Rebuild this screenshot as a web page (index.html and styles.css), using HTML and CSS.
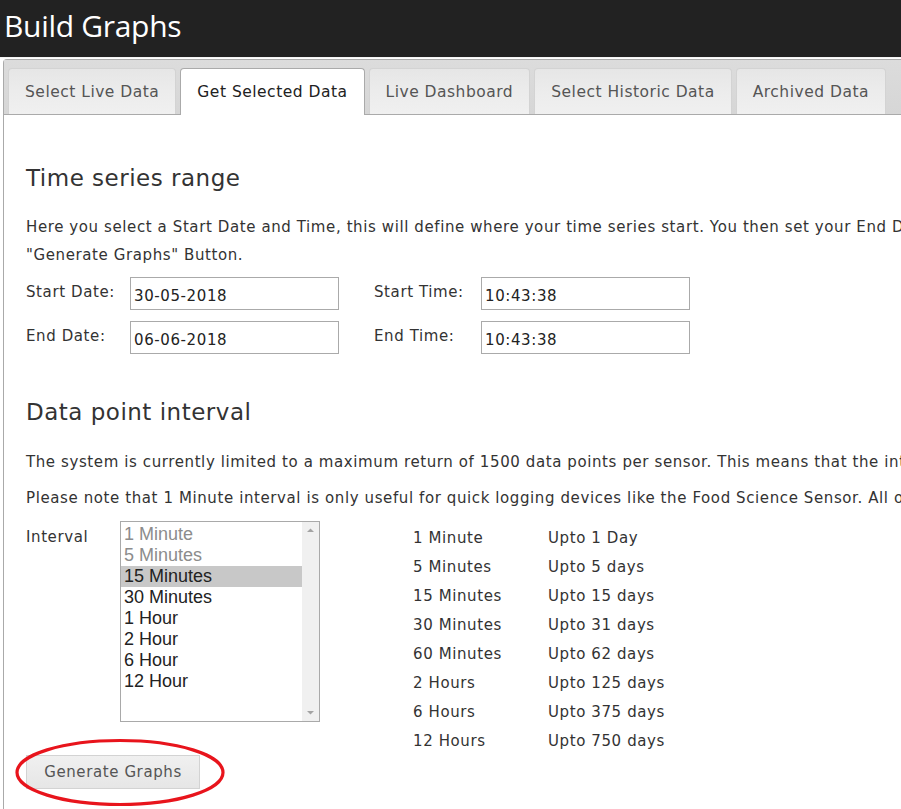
FILE: index.html
```html
<!DOCTYPE html>
<html lang="en">
<head>
<meta charset="utf-8">
<title>Build Graphs</title>
<link rel="stylesheet" href="styles.css">
</head>
<body>
<header class="topbar"><h1 class="title">Build Graphs</h1></header>
<div class="tabs">
  <ul class="tabnav">
    <li class="tab">Select Live Data</li>
    <li class="tab active">Get Selected Data</li>
    <li class="tab">Live Dashboard</li>
    <li class="tab">Select Historic Data</li>
    <li class="tab">Archived Data</li>
  </ul>
  <div class="panel">
    <h2 class="heading first">Time series range</h2>
    <p class="text">Here you select a Start Date and Time, this will define where your time series start. You then set your End Date and Time and click the<br>"Generate Graphs" Button.</p>
    <div class="range">
      <label class="lbl">Start Date:</label>
      <div class="cell"><input class="field" type="text" value="30-05-2018"></div>
      <label class="lbl">Start Time:</label>
      <div class="cell"><input class="field" type="text" value="10:43:38"></div>
      <label class="lbl">End Date:</label>
      <div class="cell"><input class="field" type="text" value="06-06-2018"></div>
      <label class="lbl">End Time:</label>
      <div class="cell"><input class="field" type="text" value="10:43:38"></div>
    </div>

    <h2 class="heading second">Data point interval</h2>
    <p class="text tight">The system is currently limited to a maximum return of 1500 data points per sensor. This means that the interval you select will limit the length of time series you can request.</p>
    <p class="text tight">Please note that 1 Minute interval is only useful for quick logging devices like the Food Science Sensor. All other sensors log at 15 minute intervals.</p>

    <div class="interval">
      <div class="ilabel">Interval</div>
      <div class="listbox" role="listbox">
        <div class="options">
          <div class="opt disabled">1 Minute</div>
          <div class="opt disabled">5 Minutes</div>
          <div class="opt selected">15 Minutes</div>
          <div class="opt">30 Minutes</div>
          <div class="opt">1 Hour</div>
          <div class="opt">2 Hour</div>
          <div class="opt">6 Hour</div>
          <div class="opt">12 Hour</div>
        </div>
        <div class="scrollbar">
          <svg class="arrow" width="17" height="17" viewBox="0 0 17 17"><path d="M5 10 L8.5 6.5 L12 10 Z" fill="#a3a3a3"/></svg>
          <svg class="arrow" width="17" height="17" viewBox="0 0 17 17"><path d="M5 7 L8.5 10.5 L12 7 Z" fill="#a3a3a3"/></svg>
        </div>
      </div>
      <table class="limits">
        <tr><td>1 Minute</td><td>Upto 1 Day</td></tr>
        <tr><td>5 Minutes</td><td>Upto 5 days</td></tr>
        <tr><td>15 Minutes</td><td>Upto 15 days</td></tr>
        <tr><td>30 Minutes</td><td>Upto 31 days</td></tr>
        <tr><td>60 Minutes</td><td>Upto 62 days</td></tr>
        <tr><td>2 Hours</td><td>Upto 125 days</td></tr>
        <tr><td>6 Hours</td><td>Upto 375 days</td></tr>
        <tr><td>12 Hours</td><td>Upto 750 days</td></tr>
      </table>
    </div>

    <div class="actions">
      <button class="btn" type="button">Generate Graphs</button>
      <svg class="ring" width="216" height="71" viewBox="0 0 216 71"><ellipse cx="108" cy="35.5" rx="103" ry="32" fill="none" stroke="#e8141c" stroke-width="3.2"/></svg>
    </div>
  </div>
</div>
</body>
</html>
```

FILE: styles.css
```css
html, body {
  margin: 0;
  padding: 0;
  overflow: hidden;
  background: #fff;
}
body {
  width: 1400px;
  height: 809px;
  font-family: "DejaVu Sans", Verdana, sans-serif;
  letter-spacing: 0.6px;
  color: #333;
}
.topbar {
  background: #222;
  height: 57px;
  border-bottom: 1px solid #f4f4f4;
}
.title {
  margin: 0;
  padding: 6px 0 0 4px;
  font-family: "Open Sans", "Noto Sans", sans-serif;
  font-weight: 400;
  font-size: 30px;
  line-height: 40px;
  color: #fff;
  letter-spacing: -0.3px;
}
.tabs {
  margin: 1px 0 0 3px;
  border-top: 1px solid #aaa;
  border-left: 1px solid #aaa;
  border-top-left-radius: 4px;
}
.tabnav {
  list-style: none;
  margin: 0;
  padding: 8px 0 0 4px;
  display: flex;
  gap: 4px;
  background: linear-gradient(#dcdcdc, #d6d6d6);
  border-bottom: 1px solid #aaa;
  height: 46px;
}
.tab {
  box-sizing: border-box;
  height: 46px;
  padding: 0 16px;
  display: flex;
  align-items: center;
  font-size: 15.5px;
  letter-spacing: 0.5px;
  color: #555;
  background: linear-gradient(#e6e6e6 0, #ececec 50%, #f0f0f0 100%);
  border: 1px solid #d3d3d3;
  border-bottom: none;
  border-top-left-radius: 4px;
  border-top-right-radius: 4px;
}
.tab.active {
  background: #fff;
  color: #212121;
  border-color: #aaa;
  height: 47px;
}
.panel {
  padding: 1px 22px 20px 22px;
  background: #fff;
}
.heading {
  font-weight: 400;
  font-size: 23px;
  letter-spacing: 0.5px;
  line-height: 30px;
  color: #333;
  margin: 0;
}
.heading.first { margin-top: 47px; }
.heading.second { margin-top: 43px; }
.text {
  font-size: 15px;
  line-height: 28px;
  margin: 20px 0 8px 0;
  white-space: nowrap;
}
.text.tight {
  margin: 24px 0 0 0;
  line-height: 22px;
}
.text.tight + .text.tight { margin-top: 14px; }
.range {
  display: grid;
  grid-template-columns: 104px 244px 107px 209px;
  row-gap: 11px;
  align-items: start;
}
.lbl {
  font-size: 15px;
  line-height: 20px;
  padding-top: 5px;
}
.field {
  box-sizing: border-box;
  width: 209px;
  height: 33px;
  border: 1px solid #aaa;
  padding: 4px 3px 0 3px;
  margin: 0;
  font-family: "DejaVu Sans", Verdana, sans-serif;
  letter-spacing: 0.6px;
  font-size: 15px;
  color: #222;
  background: #fff;
}
.interval {
  display: flex;
  align-items: flex-start;
  margin-top: 12px;
}
.ilabel {
  width: 94px;
  font-size: 15px;
  line-height: 20px;
  padding-top: 6px;
}
.listbox {
  box-sizing: border-box;
  width: 200px;
  height: 201px;
  border: 1px solid #a9a9a9;
  display: flex;
}
.options {
  flex: 1;
  padding-top: 2px;
}
.opt {
  height: 21px;
  line-height: 21px;
  padding-left: 3px;
  font-family: "Liberation Sans", Arial, sans-serif;
  letter-spacing: 0;
  font-size: 18px;
  color: #222;
}
.opt.disabled { color: #8c8c8c; }
.opt.selected { background: #c8c8c8; }
.scrollbar {
  width: 17px;
  background: #f0f0f0;
  display: flex;
  flex-direction: column;
  justify-content: space-between;
}
.arrow { display: block; }
.limits {
  margin-left: 93px;
  border-collapse: collapse;
  margin-top: 2px;
}
.limits td {
  padding: 0;
  height: 29px;
  font-size: 15px;
  color: #333;
  vertical-align: middle;
}
.limits td:first-child { width: 135px; }
.actions {
  position: relative;
  margin-top: 0;
}
.btn {
  box-sizing: border-box;
  width: 174px;
  height: 34px;
  border: 1px solid #d3d3d3;
  background: linear-gradient(#f0f0f0, #e6e6e6);
  color: #555;
  font-family: "DejaVu Sans", Verdana, sans-serif;
  letter-spacing: 0.6px;
  font-size: 15px;
  border-radius: 0;
  padding: 0;
  display: block;
}
.ring {
  position: absolute;
  left: -14px;
  top: -18px;
  pointer-events: none;
}
```
